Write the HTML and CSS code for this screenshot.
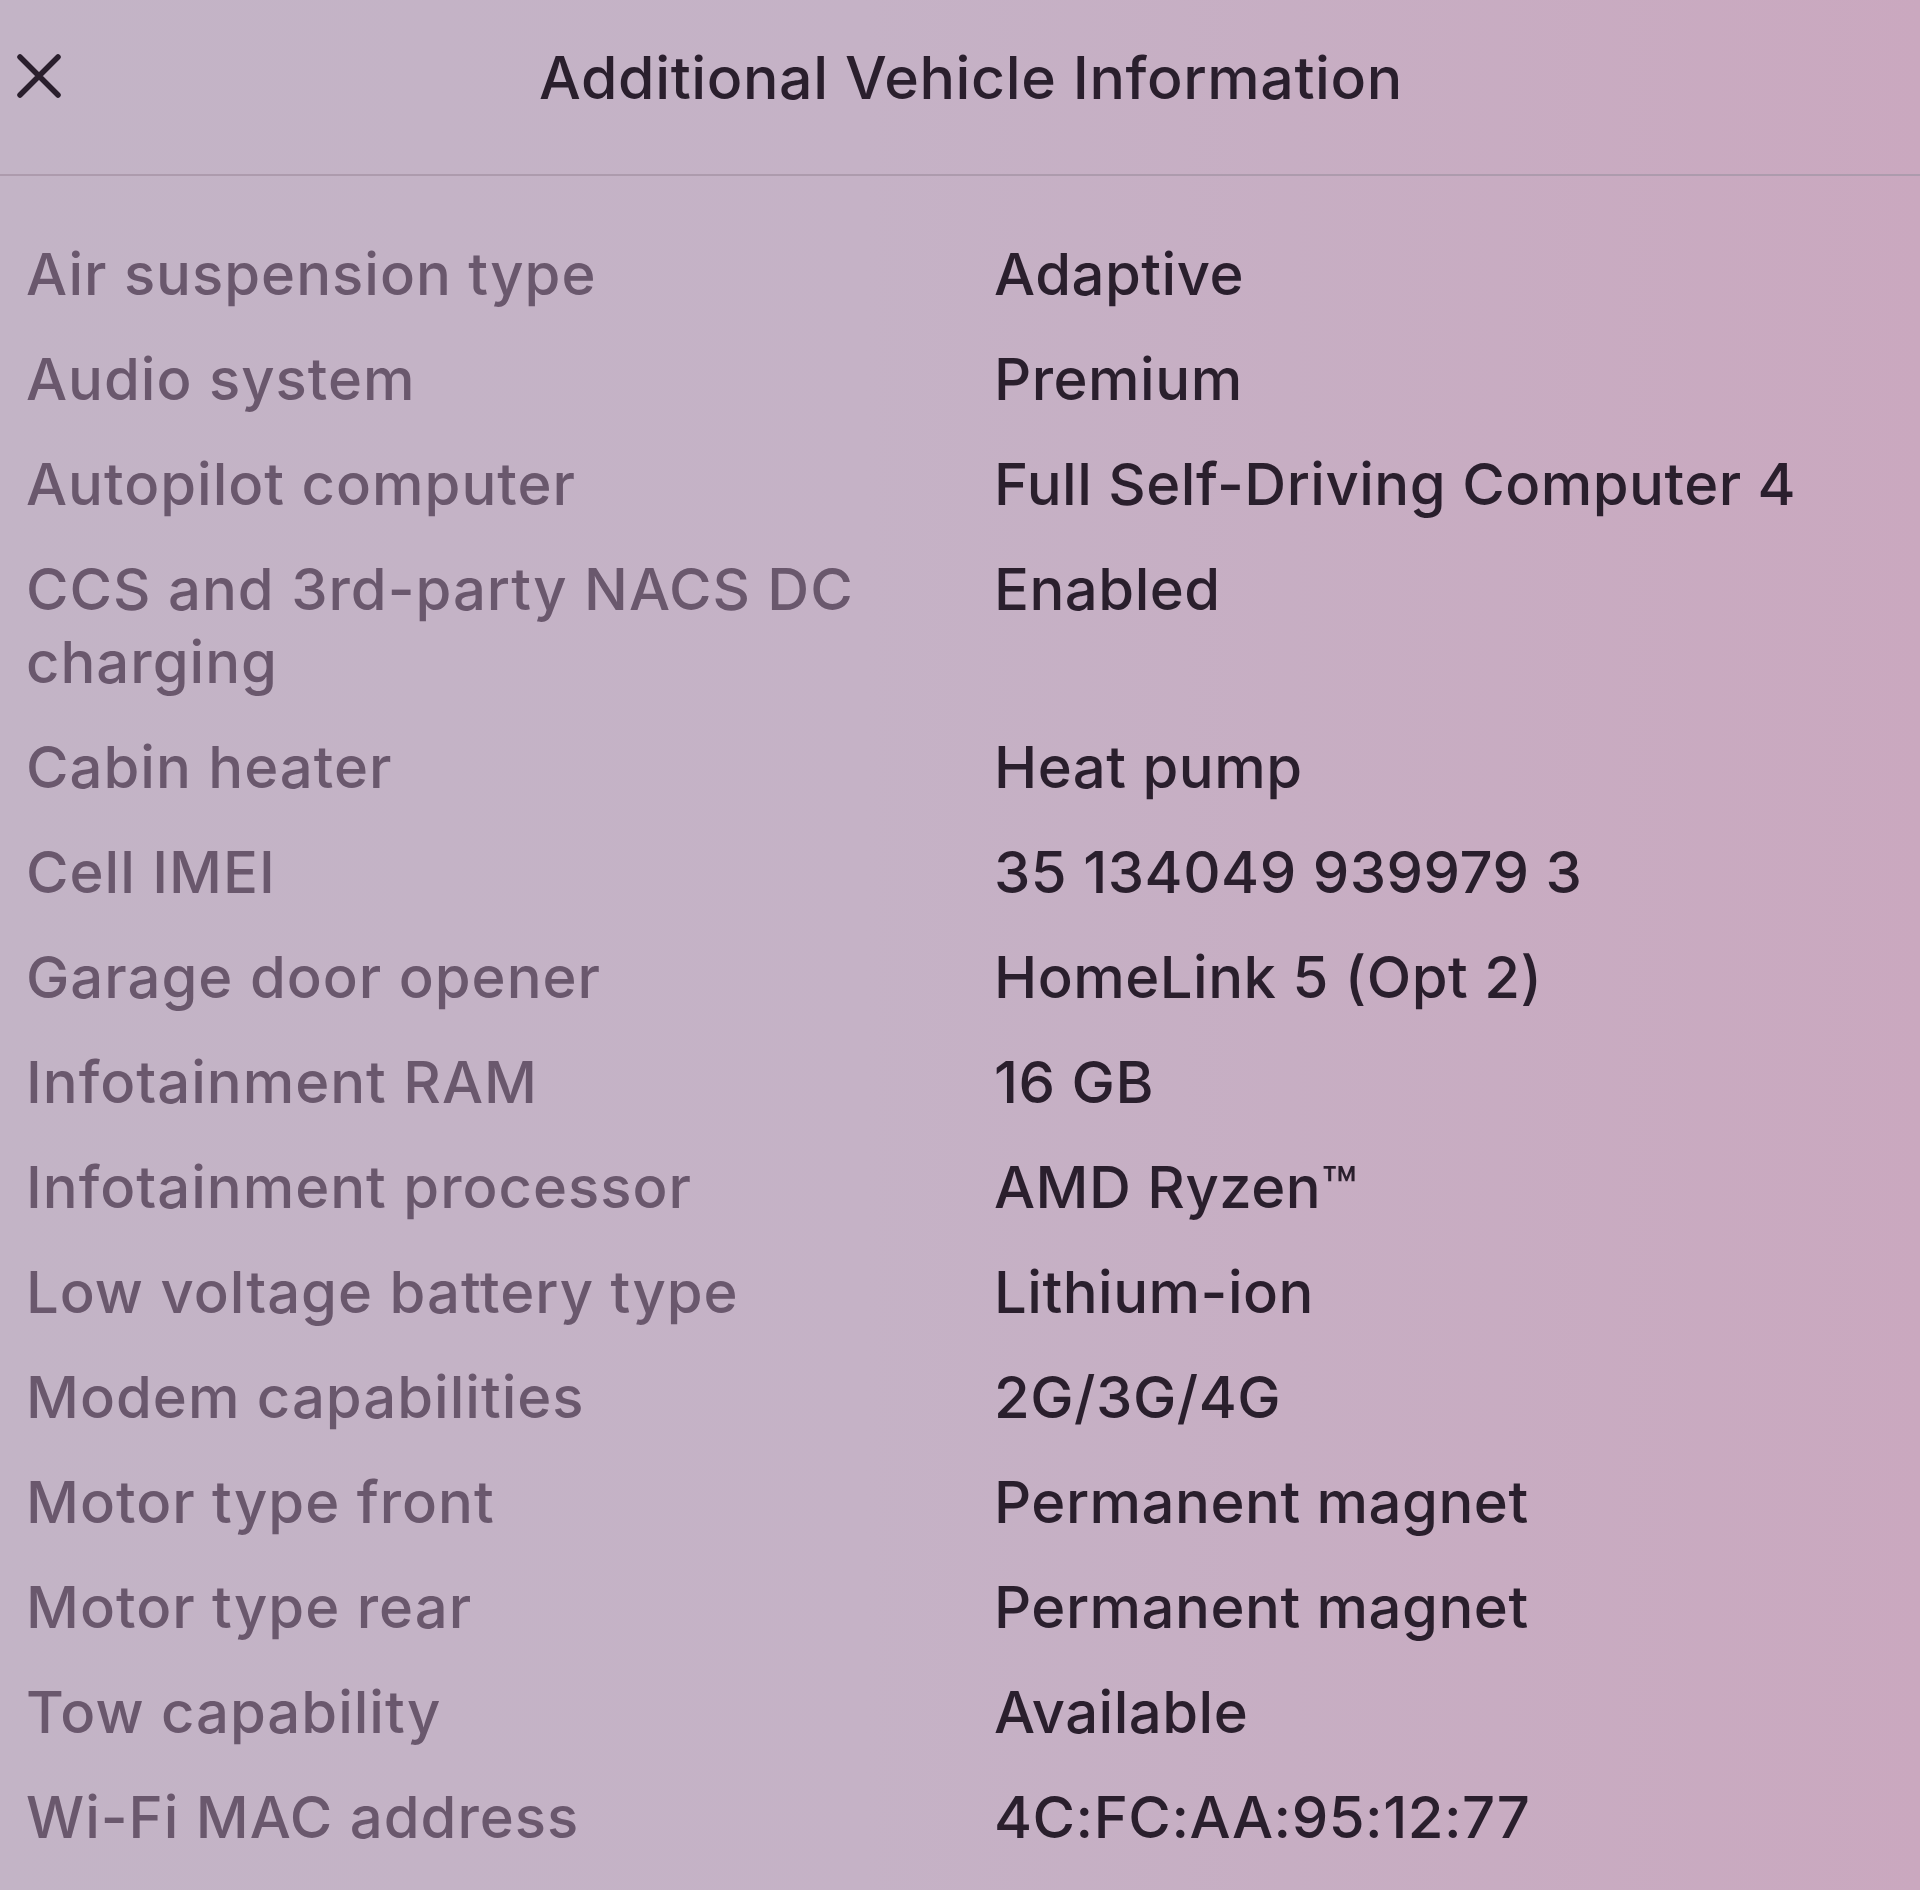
FILE: index.html
```html
<!DOCTYPE html>
<html lang="en">
<head>
<meta charset="utf-8">
<title>Additional Vehicle Information</title>
<link rel="stylesheet" href="styles.css">
</head>
<body>
<div class="screen">
  <header class="header">
    <button class="close" aria-label="Close">
      <svg width="44" height="44" viewBox="0 0 44 44"><path d="M3 3 L41 41 M41 3 L3 41" stroke="#2a1f2d" stroke-width="5.5" stroke-linecap="round" fill="none"/></svg>
    </button>
    <h1 class="title">Additional Vehicle Information</h1>
  </header>
  <dl class="list">
    <div class="row"><dt>Air suspension type</dt><dd>Adaptive</dd></div>
    <div class="row"><dt>Audio system</dt><dd>Premium</dd></div>
    <div class="row"><dt>Autopilot computer</dt><dd>Full Self-Driving Computer 4</dd></div>
    <div class="row"><dt>CCS and 3rd-party NACS DC charging</dt><dd>Enabled</dd></div>
    <div class="row"><dt>Cabin heater</dt><dd>Heat pump</dd></div>
    <div class="row"><dt>Cell IMEI</dt><dd>35 134049 939979 3</dd></div>
    <div class="row"><dt>Garage door opener</dt><dd>HomeLink 5 (Opt 2)</dd></div>
    <div class="row"><dt>Infotainment RAM</dt><dd>16 GB</dd></div>
    <div class="row"><dt>Infotainment processor</dt><dd>AMD Ryzen™</dd></div>
    <div class="row"><dt>Low voltage battery type</dt><dd>Lithium-ion</dd></div>
    <div class="row"><dt>Modem capabilities</dt><dd>2G/3G/4G</dd></div>
    <div class="row"><dt>Motor type front</dt><dd>Permanent magnet</dd></div>
    <div class="row"><dt>Motor type rear</dt><dd>Permanent magnet</dd></div>
    <div class="row"><dt>Tow capability</dt><dd>Available</dd></div>
    <div class="row"><dt>Wi-Fi MAC address</dt><dd>4C:FC:AA:95:12:77</dd></div>
  </dl>
</div>
</body>
</html>
```

FILE: styles.css
```css
html, body {
  margin: 0;
  padding: 0;
}
body {
  width: 1920px;
  height: 1890px;
  overflow: hidden;
  font-family: "Inter", "Liberation Sans", sans-serif;
  background: linear-gradient(90deg, #c3b4c6 0%, #c5b2c6 45%, #caa8bf 100%);
}
.screen {
  display: flex;
  flex-direction: column;
  height: 100%;
}
.header {
  position: relative;
  height: 174px;
  display: flex;
  align-items: center;
  justify-content: center;
  border-bottom: 2px solid #ad9bad;
}
.close {
  position: absolute;
  left: 17px;
  top: 54px;
  width: 44px;
  height: 44px;
  padding: 0;
  border: 0;
  background: none;
  display: block;
}
.close svg { display: block; }
.title {
  margin: 0 0 20px 22px;
  font-size: 59px;
  font-weight: 500;
  color: #2a1f2d;
  letter-spacing: 0.6px;
}
.list {
  margin: 46px 0 0 0;
  padding: 0;
}
.row {
  display: grid;
  grid-template-columns: 968px 1fr;
  padding: 16px 0 16px 26px;
  font-size: 58px;
  line-height: 73px;
  font-weight: 500;
}
.row dt {
  color: #6a586d;
  padding-right: 80px;
  letter-spacing: 1px;
}
.row dd {
  margin: 0;
  color: #2a1f2d;
  letter-spacing: 0.5px;
}
```
